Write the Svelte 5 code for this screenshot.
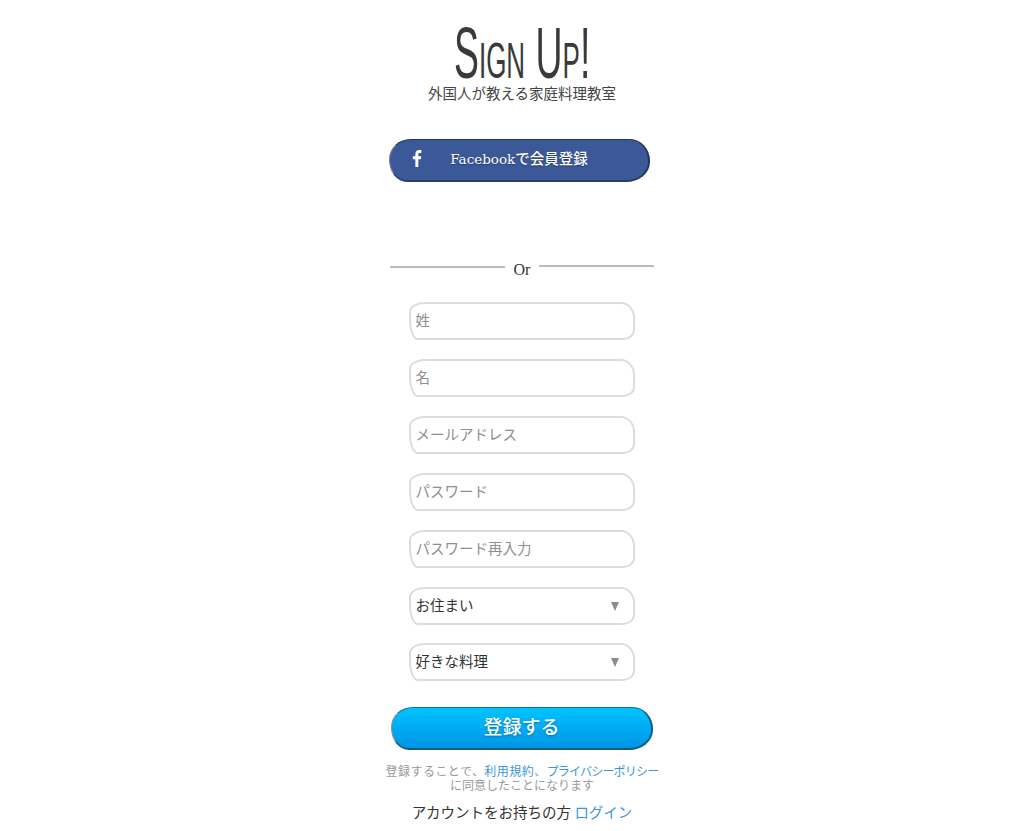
<script>
	const fields = ['姓', '名', 'メールアドレス', 'パスワード', 'パスワード再入力'];
	const selects = ['お住まい', '好きな料理'];
</script>

<main class="page">
	<header class="head">
		<h1>Sign Up!</h1>
		<p>外国人が教える家庭料理教室</p>
	</header>

	<button class="btn fb" type="button">
		<svg class="fb-icon" viewBox="0 0 10 18" width="10" height="17" aria-hidden="true">
			<path d="M6.4 18V9.8h2.7l.4-3.2H6.400v-2c0-.9.300-1.500 1.600-1.500h1.600V.2C9.300.1 8.400 0 7.300 0 5 0 3.300 1.400 3.300 4.100v2.500H.6v3.200h2.700V18z" fill="#fff" />
		</svg>
		<span class="fb-label"><span class="fb-name">Facebook</span>で会員登録</span>
	</button>

	<div class="or">
		<span class="rule"></span>
		<span class="or-text">Or</span>
		<span class="rule rule-up"></span>
	</div>

	<form class="fields">
		{#each fields as f}
			<input class="box" type="text" placeholder={f} />
		{/each}
		<div class="selects">
			{#each selects as s}
				<div class="select-wrap">
					<select class="box">
						<option>{s}</option>
					</select>
					<span class="arrow"></span>
				</div>
			{/each}
		</div>
	</form>

	<button class="btn submit" type="button">登録する</button>

	<p class="terms">
		<span class="wide">登録することで、<a href="#terms">利用規約</a>、</span><a class="tight" href="#privacy">プライバシーポリシー</a><br />に同意したことになります
	</p>
	<p class="login">アカウントをお持ちの方 <a href="#login">ログイン</a></p>
</main>

<style>
	:global(body) {
		margin: 0;
		background: #fff;
		font-family: "Noto Sans CJK JP", "Noto Sans", sans-serif;
		color: #333;
	}

	.page {
		width: 276px;
		margin: 0 auto;
		transform: translateX(10px);
		display: flex;
		flex-direction: column;
		align-items: center;
		height: 831px;
		overflow: hidden;
	}

	.head {
		display: flex;
		flex-direction: column;
		align-items: center;
		padding-top: 23px;
	}

	h1 {
		margin: 0;
		font-family: "Liberation Sans Narrow", "Liberation Sans", sans-serif;
		font-weight: 400;
		font-variant: small-caps;
		font-size: 72px;
		line-height: 61px;
		color: #3a3a3a;
		transform: scaleX(0.52);
		white-space: nowrap;
		height: 61px;
	}

	.head p {
		margin: 0;
		font-family: "Liberation Sans", "Noto Sans CJK JP", sans-serif;
		font-size: 14.5px;
		line-height: 20px;
		color: #444;
	}

	.btn {
		display: flex;
		align-items: center;
		justify-content: center;
		padding: 0;
		cursor: pointer;
		box-sizing: border-box;
		border-style: solid;
		border-radius: 22px 20px 24px 18px / 20px 22px 20px 22px;
	}

	.fb {
		position: relative;
		width: 261px;
		height: 43px;
		margin-top: 35px;
		margin-left: -5px;
		background: #3b5998;
		color: #fff;
		border-width: 1.5px 2px 2px 1.5px;
		border-color: #24355f #24355f #2c3f6c #7f869a;
		font-family: "Noto Sans CJK JP", sans-serif;
		font-size: 14.5px;
		font-weight: 500;
		text-shadow: 0 1px 1px rgba(0, 0, 0, 0.35);
		padding-bottom: 5px;
	}

	.fb-name {
		font-family: "DejaVu Serif", "Liberation Serif", serif;
		font-size: 13.5px;
		font-weight: 400;
	}

	.fb-icon {
		position: absolute;
		left: 22px;
		top: 10px;
	}

	.or {
		display: flex;
		align-items: center;
		width: 264px;
		margin-top: 76px;
		gap: 9px;
		height: 22px;
	}

	.rule {
		flex: 1;
		height: 2px;
		background: #bbb;
		margin-top: -4px;
	}

	.rule-up {
		margin-top: -7px;
	}

	.or-text {
		font-family: "Liberation Serif", serif;
		font-size: 16px;
		color: #333;
		padding-top: 1px;
	}

	.fields {
		display: flex;
		flex-direction: column;
		align-items: center;
		gap: 19px;
		margin-top: 22px;
		margin-left: -1px;
	}

	.selects {
		display: flex;
		flex-direction: column;
		gap: 18px;
	}

	.box {
		display: block;
		box-sizing: border-box;
		width: 226px;
		height: 38px;
		padding: 0 5px 3px;
		background: #fff;
		border: 2px solid #dcdcdc;
		border-radius: 16px 14px 12px 9px / 10px 16px 10px 20px;
		font-family: "Noto Sans CJK JP", sans-serif;
		font-size: 14.5px;
		color: #333;
		outline: none;
	}

	.box::placeholder {
		color: #8f8f8f;
		opacity: 1;
	}

	select.box {
		appearance: none;
		-webkit-appearance: none;
	}

	.select-wrap {
		position: relative;
	}

	.arrow {
		position: absolute;
		right: 16px;
		top: 15px;
		width: 0;
		height: 0;
		border-left: 4.5px solid transparent;
		border-right: 4.5px solid transparent;
		border-top: 9px solid #8c8c8c;
		pointer-events: none;
	}

	.submit {
		width: 262px;
		height: 43px;
		margin-top: 26px;
		background: linear-gradient(#00c3ff, #0095e6);
		color: #fff;
		border-width: 1.5px 2px 2px 1.5px;
		border-color: #0e6f9c #0d5f88 #155a7f #8b9196;
		font-family: "Noto Sans CJK JP", sans-serif;
		font-size: 19px;
		font-weight: 500;
		text-shadow: 0 1px 2px rgba(0, 0, 0, 0.3);
		padding-bottom: 6px;
	}

	.terms {
		margin: 15px 0 0;
		font-family: "Liberation Sans", "Noto Sans CJK JP", sans-serif;
		font-size: 12px;
		line-height: 14px;
		color: #999;
		text-align: center;
		white-space: nowrap;
	}

	.wide {
		letter-spacing: 0.45px;
	}

	.tight {
		letter-spacing: -0.8px;
	}

	a {
		color: #3a96d8;
		text-decoration: none;
	}

	.login {
		margin: 9px 0 0;
		font-size: 14.5px;
		line-height: 20px;
		color: #333;
		white-space: nowrap;
	}
</style>
